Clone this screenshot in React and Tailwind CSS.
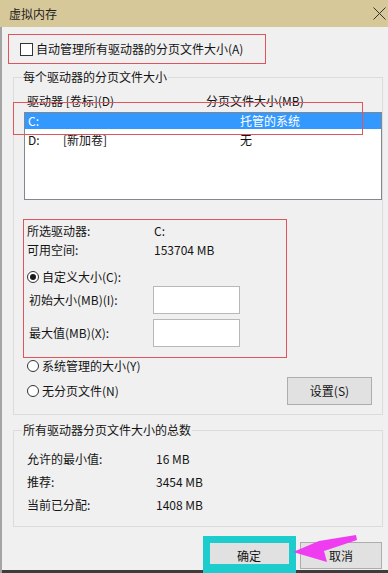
import React from "react";

function Radio({ checked }) {
  return (
    <span className="flex h-[12px] w-[12px] shrink-0 items-center justify-center rounded-full border border-[#333] bg-white">
      {checked && <span className="h-[6px] w-[6px] rounded-full bg-[#1a1a1a]" />}
    </span>
  );
}

function GroupBox({ label, className, children }) {
  return (
    <div className={`relative border border-[#dcdcdc] ${className}`}>
      <span className="absolute -top-[9px] left-[8px] bg-[#f0f0f0] px-[1px] leading-[16px]">
        {label}
      </span>
      {children}
    </div>
  );
}

export default function App() {
  return (
    <div className="relative h-[573px] w-[388px] overflow-hidden bg-[#f0f0f0] font-['Noto_Sans_CJK_SC','Liberation_Sans',sans-serif] text-[12px] leading-[16px] text-[#141414]">
      {/* title bar */}
      <div className="flex h-[27px] items-center justify-between bg-[#d7c899] pl-[9px] pr-[2px]">
        <span className="text-[#222]">虚拟内存</span>
        <svg className="h-[13px] w-[13px]" viewBox="0 0 13 13" fill="none" stroke="#333" strokeWidth="1">
          <path d="M0.5 0.5l12 12M12.5 0.5l-12 12" />
        </svg>
      </div>

      <div className="flex flex-col border-l-[2px] border-[#a4a4a4]">
        <div className="ml-[18px] mt-[14px] flex h-[16px] items-center gap-[3px]">
          <span className="h-[13px] w-[13px] border border-[#333] bg-white" />
          <span>自动管理所有驱动器的分页文件大小(A)</span>
        </div>

        <GroupBox label="每个驱动器的分页文件大小" className="ml-[11px] mt-[20px] w-[370px] pb-[9px] pt-[15px]">
          <div className="flex pl-[13px]">
            <span className="w-[179px]">驱动器 [卷标](D)</span>
            <span>分页文件大小(MB)</span>
          </div>

          <div className="ml-[10px] mt-[3px] h-[88px] w-[358px] border border-[#828790] bg-white">
            <div className="flex h-[16px] items-center bg-[#3399ff] pl-[3px] text-white">
              <span className="w-[35px]">C:</span>
              <span className="w-[177px]" />
              <span>托管的系统</span>
            </div>
            <div className="mt-[3px] flex h-[16px] items-center pl-[3px]">
              <span className="w-[35px]">D:</span>
              <span className="w-[177px]">[新加卷]</span>
              <span>无</span>
            </div>
          </div>

          <div className="ml-[13px] mt-[23px] flex flex-col gap-[3px]">
            <div className="flex">
              <span className="w-[127px]">所选驱动器:</span>
              <span>C:</span>
            </div>
            <div className="flex">
              <span className="w-[127px]">可用空间:</span>
              <span>153704 MB</span>
            </div>
          </div>

          <div className="ml-[13px] mt-[11px] flex h-[16px] items-center gap-[3px]">
            <Radio checked />
            <span>自定义大小(C):</span>
          </div>

          <div className="ml-[15px] mt-[1px] flex items-center">
            <span className="w-[124px]">初始大小(MB)(I):</span>
            <span className="h-[28px] w-[87px] border border-[#b8b8b8] bg-white" />
          </div>
          <div className="ml-[15px] mt-[5px] flex items-center">
            <span className="w-[124px]">最大值(MB)(X):</span>
            <span className="h-[28px] w-[87px] border border-[#b8b8b8] bg-white" />
          </div>

          <div className="ml-[13px] mt-[11px] flex h-[16px] items-center gap-[3px]">
            <Radio />
            <span>系统管理的大小(Y)</span>
          </div>

          <div className="ml-[13px] mr-[10px] mt-[3px] flex h-[28px] items-center justify-between">
            <div className="flex items-center gap-[3px]">
              <Radio />
              <span>无分页文件(N)</span>
            </div>
            <button className="h-[28px] w-[85px] border border-[#adadad] bg-[#e1e1e1]">设置(S)</button>
          </div>
        </GroupBox>

        <GroupBox label="所有驱动器分页文件大小的总数" className="ml-[11px] mt-[15px] w-[370px] pb-[10px] pt-[16px]">
          <div className="flex h-[23px] items-center pl-[13px]">
            <span className="w-[129px]">允许的最小值:</span>
            <span>16 MB</span>
          </div>
          <div className="flex h-[23px] items-center pl-[13px]">
            <span className="w-[129px]">推荐:</span>
            <span>3454 MB</span>
          </div>
          <div className="flex h-[23px] items-center pl-[13px]">
            <span className="w-[129px]">当前已分配:</span>
            <span>1408 MB</span>
          </div>
        </GroupBox>

        <div className="mt-[15px] flex justify-end gap-[10px] pr-[6px]">
          <button className="h-[27px] w-[82px] border border-[#adadad] bg-[#e1e1e1]">确定</button>
          <button className="h-[27px] w-[82px] border border-[#adadad] bg-[#e1e1e1]">取消</button>
        </div>
        <div className="mt-[1px] h-[3px] bg-[#3c3c3c]" />
      </div>

      {/* annotation boxes */}
      <div className="absolute left-[8px] top-[34px] h-[30px] w-[258px] border border-[#e0545e]" />
      <div className="absolute left-[13px] top-[102px] h-[33px] w-[350px] border border-[#e0545e]" />
      <div className="absolute left-[23px] top-[219px] h-[139px] w-[264px] border border-[#e0545e]" />
      <div className="absolute left-[203px] top-[536px] h-[37px] w-[93px] border-[7px] border-b-[9px] border-[#1dcdcd]" />

      {/* pointer arrow */}
      <svg className="absolute left-[288px] top-[530px] h-[35px] w-[80px]" viewBox="0 0 80 35">
        <polygon points="5,22 31,11 68,5 69,10 36,21 39,32" fill="#f03cf0" />
      </svg>
    </div>
  );
}
